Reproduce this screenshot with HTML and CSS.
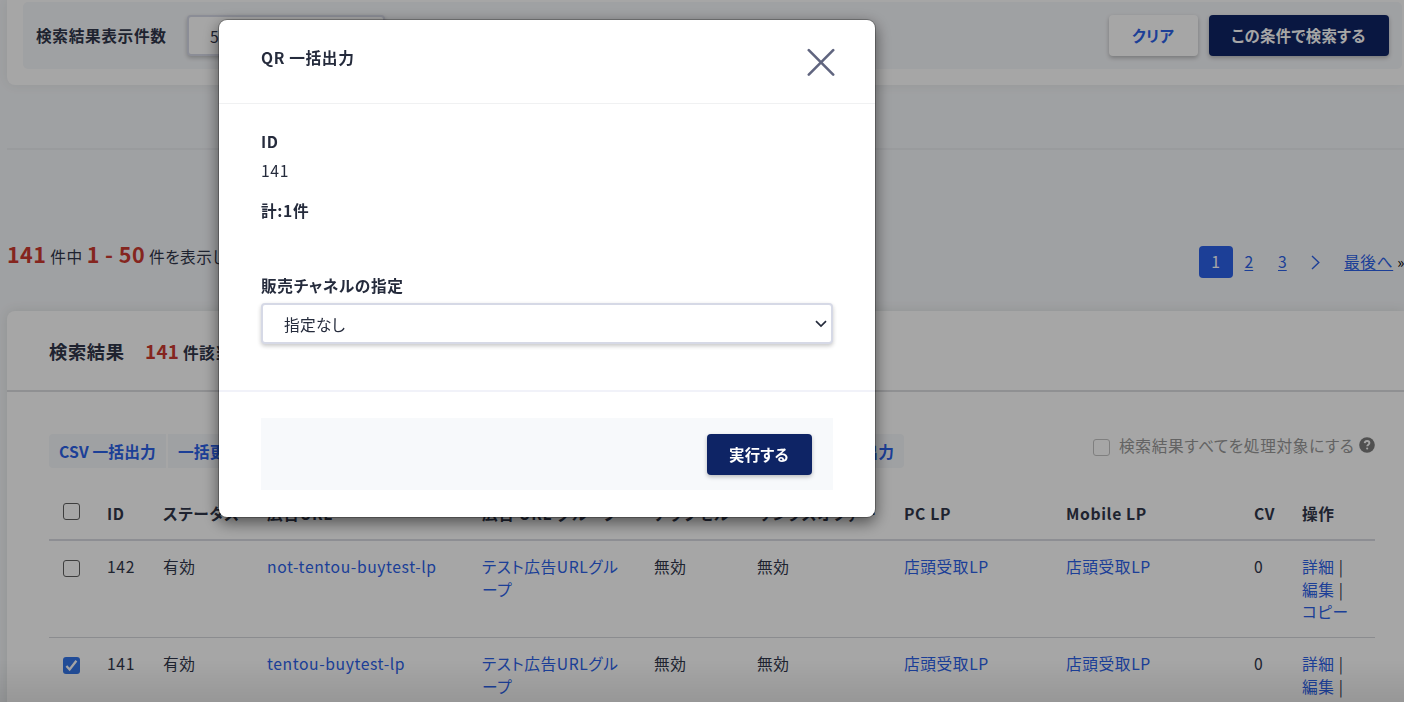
FILE: index.html
```html
<!DOCTYPE html>
<html lang="ja">
<head>
    <meta charset="UTF-8">
    <meta name="viewport" content="width=device-width, initial-scale=1.0">
    <title>広告URL一覧</title>
    <link rel="stylesheet" href="styles.css">
</head>
<body>
    <main class="page">
        <section class="search-card">
            <div class="search-panel">
                <label class="search-label">検索結果表示件数</label>
                <div class="select select-count">50</div>
                <div class="search-actions">
                    <button type="button" class="btn btn-clear">クリア</button>
                    <button type="button" class="btn btn-primary btn-search">この条件で検索する</button>
                </div>
            </div>
        </section>

        <hr class="divider">

        <div class="list-nav">
            <p class="summary"><b>141</b> 件中 <b>1 - 50</b> 件を表示しています</p>
            <nav class="pager">
                <span class="pager-current">1</span>
                <a href="#" class="pager-two">2</a>
                <a href="#" class="pager-three">3</a>
                <svg class="pager-next" viewBox="0 0 9 15"><path d="M1 1l6.8 6.5L1 14"/></svg>
                <a href="#" class="pager-last">最後へ</a>
                <span class="pager-end">»</span>
            </nav>
        </div>

        <section class="result-card">
            <header class="result-header">
                <h2>検索結果</h2>
                <p><b>141</b> 件該当しました</p>
            </header>
            <div class="toolbar">
                <div class="bulk-buttons">
                    <button type="button" class="bulk bulk-csv">CSV 一括出力</button>
                    <button type="button" class="bulk bulk-update">一括更新</button>
                    <button type="button" class="bulk bulk-qr">QR 一括出力</button>
                </div>
                <div class="select-all">
                    <span class="checkbox checkbox-disabled"></span>
                    <span class="select-all-text">検索結果すべてを処理対象にする</span>
                    <svg class="help" viewBox="0 0 16 16"><circle cx="8" cy="8" r="7.8"/><path d="M5.7 6.1C5.9 4.6 6.9 4 8.1 4c1.3 0 2.3.8 2.3 2 0 1.7-2.2 1.7-2.2 3.3"/><rect x="7.1" y="10.5" width="2.1" height="2.1" rx="1"/></svg>
                </div>
            </div>
            <table class="result-table">
                <colgroup>
                    <col class="col-check"><col class="col-id"><col class="col-status"><col class="col-url"><col class="col-group"><col class="col-upsell"><col class="col-thanks"><col class="col-pc"><col class="col-mobile"><col class="col-cv"><col class="col-action">
                </colgroup>
                <thead>
                    <tr>
                        <th><span class="checkbox"></span></th>
                        <th>ID</th>
                        <th>ステータス</th>
                        <th>広告URL</th>
                        <th>広告 URL グループ</th>
                        <th>アップセル</th>
                        <th>サンクスオファー</th>
                        <th>PC LP</th>
                        <th>Mobile LP</th>
                        <th>CV</th>
                        <th>操作</th>
                    </tr>
                </thead>
                <tbody>
                    <tr>
                        <td><span class="checkbox"></span></td>
                        <td>142</td>
                        <td>有効</td>
                        <td><a href="#">not-tentou-buytest-lp</a></td>
                        <td><a href="#">テスト広告URLグル<br>ープ</a></td>
                        <td>無効</td>
                        <td>無効</td>
                        <td><a href="#">店頭受取LP</a></td>
                        <td><a href="#">店頭受取LP</a></td>
                        <td>0</td>
                        <td><a href="#">詳細</a> |<br><a href="#">編集</a> |<br><a href="#">コピー</a></td>
                    </tr>
                    <tr>
                        <td><span class="checkbox checkbox-checked"><svg viewBox="0 0 17 17"><path d="M3.4 9l3.2 3.5 6.8-8.7"/></svg></span></td>
                        <td>141</td>
                        <td>有効</td>
                        <td><a href="#">tentou-buytest-lp</a></td>
                        <td><a href="#">テスト広告URLグル<br>ープ</a></td>
                        <td>無効</td>
                        <td>無効</td>
                        <td><a href="#">店頭受取LP</a></td>
                        <td><a href="#">店頭受取LP</a></td>
                        <td>0</td>
                        <td><a href="#">詳細</a> |<br><a href="#">編集</a> |<br><a href="#">コピー</a></td>
                    </tr>
                </tbody>
            </table>
        </section>
    </main>

    <div class="backdrop"></div>

    <div class="modal" role="dialog">
        <div class="modal-header">
            <h3>QR 一括出力</h3>
            <svg class="close" viewBox="0 0 28 28"><path d="M1.8 2.2l24.4 24.4M26.2 2.2L1.8 26.6"/></svg>
        </div>
        <div class="modal-body">
            <p class="modal-title">ID</p>
            <p class="modal-id">141</p>
            <p class="modal-total">計:1件</p>
            <p class="modal-channel">販売チャネルの指定</p>
            <div class="select select-channel">
                <span>指定なし</span>
                <svg viewBox="0 0 12 8"><path d="M1 1.2l5 4.8 5-4.8"/></svg>
            </div>
        </div>
        <div class="modal-footer">
            <div class="modal-actions">
                <button type="button" class="btn btn-primary btn-run">実行する</button>
            </div>
        </div>
    </div>
</body>
</html>
```
FILE: styles.css
```css
* {
    box-sizing: border-box;
}
html, body {
    height: 100%;
    overflow: hidden;
}
body {
    margin: 0;
    background: #f5f7fa;
    color: #30364a;
    font-family: "Noto Sans CJK JP", sans-serif;
    font-size: 15.7px;
    line-height: 23px;
    letter-spacing: 0.04em;
    font-feature-settings: "palt";
    white-space: nowrap;
}
h2, h3, p {
    margin: 0;
}
b {
    font-weight: 700;
}
a {
    color: #2b61e9;
    text-decoration: none;
}
button {
    border: 0;
    padding: 0;
    font: inherit;
    font-weight: 700;
    letter-spacing: inherit;
    font-feature-settings: inherit;
}
svg {
    display: block;
    fill: none;
}
.page {
    height: 702px;
    padding-left: 7px;
    overflow: hidden;
}

/* search conditions */
.search-card {
    height: 85px;
    padding: 2px 2px 16px 16px;
    background: #fff;
    border-radius: 0 0 0 8px;
    box-shadow: 0 0 12px rgba(60, 70, 40, 0.08);
}
.search-panel {
    display: flex;
    align-items: flex-start;
    height: 67px;
    padding: 13px 13px 0;
    background: #f5f7fa;
    border-radius: 5px;
}
.search-label {
    width: 151px;
    padding-top: 9px;
    font-weight: 700;
}
.select {
    display: flex;
    align-items: center;
    height: 41px;
    padding: 1px 4px 0 21px;
    border: 2px solid #d6d9e6;
    border-radius: 4px;
    background: #fff;
    box-shadow: 0 2px 4px rgba(0, 0, 0, 0.22);
}
.select-count {
    width: 198px;
}
.search-actions {
    display: flex;
    gap: 11px;
    margin-left: auto;
}
.btn {
    height: 41px;
    padding-right: 1px;
    border-radius: 4px;
    font-size: 15.4px;
    letter-spacing: 0.02em;
    box-shadow: 0 2px 4px rgba(0, 0, 0, 0.25);
}
.btn-clear {
    width: 89px;
    background: #fff;
    color: #2b61e9;
}
.btn-primary {
    background: #0e2465;
    color: #fff;
}
.btn-search {
    width: 180px;
}
.divider {
    height: 2px;
    margin: 63px 0 0;
    border: 0;
    background: #eceef2;
}

/* count and pager */
.list-nav {
    display: flex;
    justify-content: space-between;
    height: 161px;
    padding-top: 96px;
}
.summary {
    line-height: 15px;
    letter-spacing: 0.03em;
}
.summary b {
    color: #cd3a30;
    font-size: 21.5px;
    letter-spacing: 0.02em;
}
.pager {
    display: flex;
    width: 205px;
    line-height: 32px;
}
.pager a {
    text-decoration: underline;
    text-underline-offset: 2px;
}
.pager-current {
    flex: none;
    width: 34px;
    height: 32px;
    margin-right: 11.5px;
    border-radius: 4px;
    background: #2b61e9;
    color: #fff;
    text-align: center;
}
.pager-two,
.pager-three {
    flex: none;
    width: 10px;
    letter-spacing: 0;
}
.pager-two {
    margin-right: 23.5px;
}
.pager-next {
    flex: none;
    width: 9px;
    height: 15px;
    margin: 9px 24px 0 23px;
    stroke: #2b61e9;
    stroke-width: 1.4;
}
.pager-end {
    margin-left: 4px;
    color: #000;
    font-size: 15px;
}

/* results */
.result-card {
    height: 500px;
    background: #fff;
    border-radius: 8px 0 0 0;
    box-shadow: 0 0 12px rgba(60, 70, 40, 0.12);
}
.result-header {
    display: flex;
    height: 81px;
    padding: 29px 0 0 42px;
    border-bottom: 2px solid #dcdde0;
    font-weight: 700;
}
.result-header h2 {
    width: 96px;
    font-size: 18.3px;
    line-height: 23px;
}
.result-header p {
    line-height: 21px;
    letter-spacing: 0.02em;
}
.result-header b {
    color: #cd3a30;
    font-size: 18.8px;
}
.toolbar {
    display: flex;
    justify-content: space-between;
    height: 92px;
    padding: 42px 29px 0 42px;
}
.bulk-buttons {
    display: flex;
    gap: 2px;
    width: 855px;
}
.bulk {
    height: 34px;
    background: #f5f7fa;
    color: #2b61e9;
    text-align: left;
    letter-spacing: 0.01em;
}
.bulk-csv {
    width: 117px;
    padding-left: 10px;
    border-radius: 4px 0 0 4px;
}
.bulk-update {
    width: 117px;
    padding-left: 10px;
}
.bulk-qr {
    flex: 1;
    padding-right: 10px;
    border-radius: 0 4px 4px 0;
    text-align: right;
}
.select-all {
    display: flex;
    align-items: flex-start;
    color: #989898;
}
.select-all-text {
    width: 240px;
    margin-left: 9px;
}
.help {
    width: 16px;
    height: 16px;
    margin-top: 3px;
}
.help circle {
    fill: #7c7c7c;
}
.help path {
    stroke: #fff;
    stroke-width: 1.9;
}
.help rect {
    fill: #fff;
}
.checkbox {
    display: block;
    width: 17px;
    height: 17px;
    border: 1px solid #606060;
    border-radius: 3px;
    background: #fff;
}
.checkbox-disabled {
    margin-top: 5px;
    border-color: #c4c4c4;
}
.checkbox-checked {
    border: 0;
    background: #3476ea;
}
.checkbox-checked path {
    stroke: #fff;
    stroke-width: 2.3;
}
.result-table {
    width: 1326px;
    margin-left: 42px;
    border-collapse: separate;
    border-spacing: 0;
    table-layout: fixed;
}
.result-table th,
.result-table td {
    padding: 0;
    text-align: left;
    vertical-align: top;
}
.result-table th {
    height: 57px;
    padding-top: 18px;
    border-bottom: 2px solid #d9dbe2;
}
.result-table td {
    height: 97px;
    padding-top: 15px;
    border-bottom: 1px solid #d6d7dc;
    line-height: 22.5px;
}
.result-table .checkbox {
    margin-left: 14px;
}
.result-table td a {
    letter-spacing: 0.038em;
}
th .checkbox {
    margin-top: 1px;
}
td .checkbox {
    margin-top: 4px;
}
.col-check { width: 58px; }
.col-id { width: 56px; }
.col-status { width: 104px; }
.col-url { width: 215px; }
.col-group { width: 172px; }
.col-upsell { width: 103px; }
.col-thanks { width: 147px; }
.col-pc { width: 162px; }
.col-mobile { width: 188px; }
.col-cv { width: 48px; }
.col-action { width: 73px; }

.backdrop {
    position: fixed;
    inset: 0;
    background: linear-gradient(rgba(0, 0, 0, 0) 660px, rgba(0, 0, 0, 0.09)), rgba(0, 0, 0, 0.35);
}

/* dialog */
.modal {
    position: fixed;
    top: 19px;
    left: 218px;
    width: 658px;
    height: 499px;
    border: 1px solid rgba(0, 0, 0, 0.25);
    border-radius: 9px;
    background: #fff;
    background-clip: padding-box;
    box-shadow: 0 5px 15px rgba(0, 0, 0, 0.5);
    color: #252b3c;
}
.modal-header {
    display: flex;
    justify-content: space-between;
    height: 84px;
    padding: 26px 40px 0 42px;
    border-bottom: 1px solid #f0f1f2;
}
.modal-header h3 {
    font-size: 15.7px;
    line-height: 23px;
}
.close {
    width: 28px;
    height: 28px;
    margin-top: 2px;
    stroke: #60657f;
    stroke-width: 2.6;
    stroke-linecap: round;
}
.modal-body {
    height: 288px;
    padding: 26px 42px 0;
    border-bottom: 2px solid #f1f2f9;
}
.modal-title,
.modal-total,
.modal-channel {
    font-weight: 700;
}
.modal-id {
    margin-top: 6px;
}
.modal-total {
    margin-top: 17px;
}
.modal-channel {
    margin: 52px 0 6px;
}
.select-channel {
    justify-content: space-between;
    letter-spacing: 0.02em;
}
.select-channel svg {
    width: 12px;
    height: 8px;
    stroke: #252b3c;
    stroke-width: 1.7;
}
.modal-footer {
    padding: 26px 42px 0;
}
.modal-actions {
    display: flex;
    justify-content: flex-end;
    height: 72px;
    padding: 16px 21px 0 0;
    background: #f7f9fb;
}
.btn-run {
    width: 105px;
}
```
